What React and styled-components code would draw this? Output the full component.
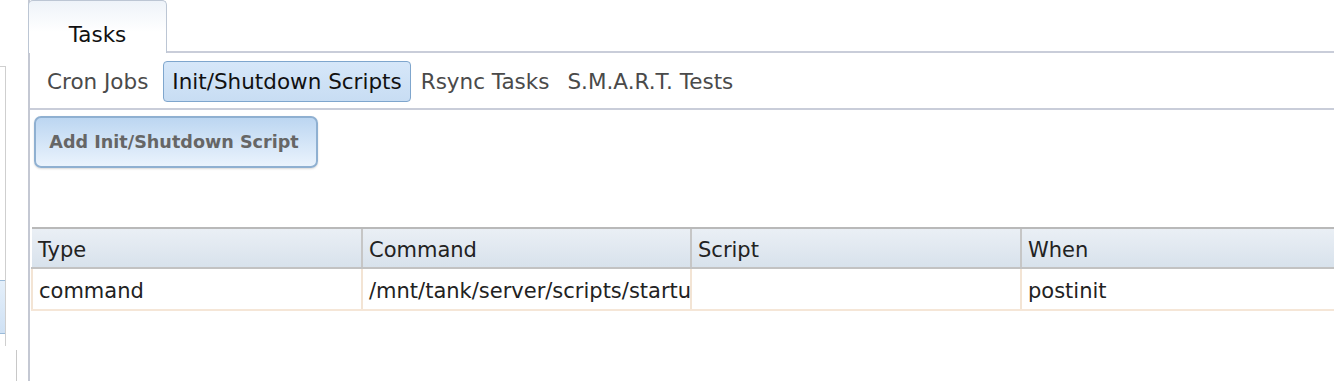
import React from 'react';
import styled, { createGlobalStyle } from 'styled-components';

const GlobalStyle = createGlobalStyle`
    html, body {
        margin: 0;
        padding: 0;
        background: #fff;
        overflow: hidden;
    }
    body {
        font-family: "DejaVu Sans", Verdana, sans-serif;
        color: #222;
    }
`;

const Page = styled.div`
    display: flex;
    width: 1334px;
    height: 381px;
    overflow: hidden;
`;

const SidePane = styled.div`
    width: 28px;
    flex: none;
    padding-top: 66px;
    box-sizing: border-box;
`;

const SideBox = styled.div`
    width: 6px;
    height: 280px;
    border-top: 1px solid #cfcfcf;
    border-right: 1px solid #cfcfcf;
    display: flex;
    flex-direction: column;
    justify-content: flex-end;
    padding-bottom: 12px;
    box-sizing: border-box;
`;

const SideSelected = styled.div`
    height: 52px;
    width: 5px;
    background: linear-gradient(#e4effa, #cfe1f4);
    border-top: 1px solid #9bbbd9;
    border-bottom: 1px solid #9bbbd9;
`;

const SideLine = styled.div`
    margin: 4px 0 0 16px;
    width: 1px;
    height: 40px;
    background: #c8c8c8;
`;

const Main = styled.div`
    flex: 1;
    border-left: 2px solid #c4c8d3;
    display: flex;
    flex-direction: column;
    min-width: 0;
`;

const TabBar = styled.div`
    height: 53px;
    display: flex;
    align-items: flex-end;
    border-bottom: 2px solid #c9cdd9;
    box-sizing: border-box;
    margin-left: -2px;
`;

const Tab = styled.div`
    width: 139px;
    height: 53px;
    box-sizing: border-box;
    border: 1px solid #bcc6d4;
    border-bottom: none;
    border-radius: 5px 5px 0 0;
    background: linear-gradient(#eef3f9, #ffffff 60%);
    font-size: 21.5px;
    display: flex;
    align-items: center;
    justify-content: center;
    padding-top: 14px;
    margin-bottom: -2px;
    color: #111;
`;

const SubTabs = styled.div`
    height: 57px;
    display: flex;
    align-items: center;
    gap: 2px;
    padding-left: 9px;
    border-bottom: 2px solid #c9cdd9;
    box-sizing: border-box;
`;

const SubTab = styled.div`
    font-size: 21.5px;
    height: 41px;
    display: flex;
    align-items: center;
    padding: 1px ${p => (p.active ? '8px' : '7px')} 0;
    margin: 1px 0 0 ${p => (p.active ? '5px' : '0')};
    box-sizing: border-box;
    border: 1px solid ${p => (p.active ? '#7fa6cd' : 'transparent')};
    border-radius: 4px;
    background: ${p => (p.active ? 'linear-gradient(#d6e7f9, #c8ddf3)' : 'transparent')};
    color: ${p => (p.active ? '#111' : '#4a4a4a')};
`;

const Content = styled.div`
    padding: 6px 0 0 4px;
`;

const AddButton = styled.button`
    width: 284px;
    height: 52px;
    border: 2px solid #8fb0d1;
    border-radius: 7px;
    background: linear-gradient(#bcd6f1, #eaf3fd);
    box-shadow: 0 1px 2px rgba(0, 0, 0, 0.15);
    font-family: "DejaVu Sans", Verdana, sans-serif;
    font-weight: bold;
    font-size: 17.6px;
    color: #666;
    padding: 0 4px 0 0;
    display: flex;
    align-items: center;
    justify-content: center;
`;

const TableWrap = styled.div`
    margin: 59px 0 0 1px;
    overflow: hidden;
`;

const Table = styled.table`
    border-collapse: collapse;
    table-layout: fixed;
    width: 1319px;
    font-size: 21px;
`;

const HeadCell = styled.th`
    width: ${p => p.w}px;
    height: 40px;
    box-sizing: border-box;
    text-align: left;
    font-weight: normal;
    padding: 3px 6px 0;
    background: linear-gradient(#eaeff5, #d8e2ec);
    border-top: 2px solid #b9b9b9;
    border-bottom: 2px solid #c2c2c2;
    border-left: 2px solid #c6c6c6;
    &:first-child {
        border-left: none;
    }
`;

const Cell = styled.td`
    height: 42px;
    box-sizing: border-box;
    padding: 3px 6px 0;
    white-space: nowrap;
    overflow: hidden;
    border-bottom: 2px solid #f5e6d7;
    border-left: 2px solid #f3e4d4;
`;

const subTabs = ['Cron Jobs', 'Init/Shutdown Scripts', 'Rsync Tasks', 'S.M.A.R.T. Tests'];
const columns = [
    { label: 'Type', w: 330 },
    { label: 'Command', w: 329 },
    { label: 'Script', w: 330 },
    { label: 'When', w: 330 },
];
const rows = [['command', '/mnt/tank/server/scripts/startup.sh', '', 'postinit']];

const App = () => (
    <Page>
        <GlobalStyle />
        <SidePane>
            <SideBox>
                <SideSelected />
            </SideBox>
            <SideLine />
        </SidePane>
        <Main>
            <TabBar>
                <Tab>Tasks</Tab>
            </TabBar>
            <SubTabs>
                {subTabs.map(t => (
                    <SubTab key={t} active={t === 'Init/Shutdown Scripts'}>
                        {t}
                    </SubTab>
                ))}
            </SubTabs>
            <Content>
                <AddButton type="button">Add Init/Shutdown Script</AddButton>
            </Content>
            <TableWrap>
                <Table>
                    <thead>
                        <tr>
                            {columns.map(c => (
                                <HeadCell key={c.label} w={c.w}>
                                    {c.label}
                                </HeadCell>
                            ))}
                        </tr>
                    </thead>
                    <tbody>
                        {rows.map((r, i) => (
                            <tr key={i}>
                                {r.map((v, j) => (
                                    <Cell key={j}>{v}</Cell>
                                ))}
                            </tr>
                        ))}
                    </tbody>
                </Table>
            </TableWrap>
        </Main>
    </Page>
);

export default App;
